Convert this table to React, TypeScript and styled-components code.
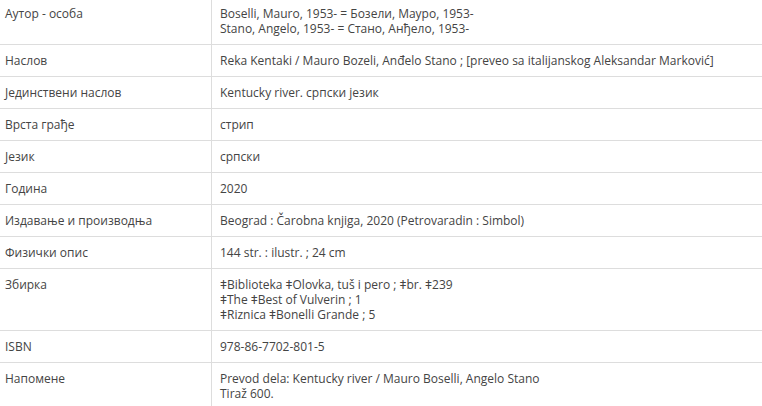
import React from 'react';
import styled, { createGlobalStyle } from 'styled-components';

const GlobalStyle = createGlobalStyle`
  html, body {
    margin: 0;
    padding: 0;
    background: #fff;
    overflow: hidden;
  }
`;

const Table = styled.table`
  width: 100%;
  margin-top: -3px;
  border-collapse: collapse;
  font-family: 'Open Sans', 'Liberation Sans', sans-serif;
  font-size: 12px;
  line-height: 15px;
  color: #444;
`;

const Row = styled.tr`
  border-top: 1px solid #ddd;
  border-bottom: 1px solid #ddd;
`;

const Label = styled.td`
  width: 201px;
  padding: 8px 5px;
  border-right: 1px solid #ddd;
  vertical-align: top;
`;

const Value = styled.td`
  padding: 8px 8px;
  vertical-align: top;
`;

const Line = styled.div`
  white-space: nowrap;
`;

type Entry = { label: string; lines: string[] };

const entries: Entry[] = [
  {
    label: 'Аутор - особа',
    lines: ['Boselli, Mauro, 1953- = Бозели, Мауро, 1953-', 'Stano, Angelo, 1953- = Стано, Анђело, 1953-'],
  },
  {
    label: 'Наслов',
    lines: ['Reka Kentaki / Mauro Bozeli, Anđelo Stano ; [preveo sa italijanskog Aleksandar Marković]'],
  },
  { label: 'Јединствени наслов', lines: ['Kentucky river. српски језик'] },
  { label: 'Врста грађе', lines: ['стрип'] },
  { label: 'Језик', lines: ['српски'] },
  { label: 'Година', lines: ['2020'] },
  { label: 'Издавање и производња', lines: ['Beograd : Čarobna knjiga, 2020 (Petrovaradin : Simbol)'] },
  { label: 'Физички опис', lines: ['144 str. : ilustr. ; 24 cm'] },
  {
    label: 'Збирка',
    lines: ['ǂBiblioteka ǂOlovka, tuš i pero ; ǂbr. ǂ239', 'ǂThe ǂBest of Vulverin ; 1', 'ǂRiznica ǂBonelli Grande ; 5'],
  },
  { label: 'ISBN', lines: ['978-86-7702-801-5'] },
  { label: 'Напомене', lines: ['Prevod dela: Kentucky river / Mauro Boselli, Angelo Stano', 'Tiraž 600.'] },
];

export default function App() {
  return (
    <>
      <GlobalStyle />
      <Table>
        <tbody>
          {entries.map((e) => (
            <Row key={e.label}>
              <Label>{e.label}</Label>
              <Value>
                {e.lines.map((l) => (
                  <Line key={l}>{l}</Line>
                ))}
              </Value>
            </Row>
          ))}
        </tbody>
      </Table>
    </>
  );
}
